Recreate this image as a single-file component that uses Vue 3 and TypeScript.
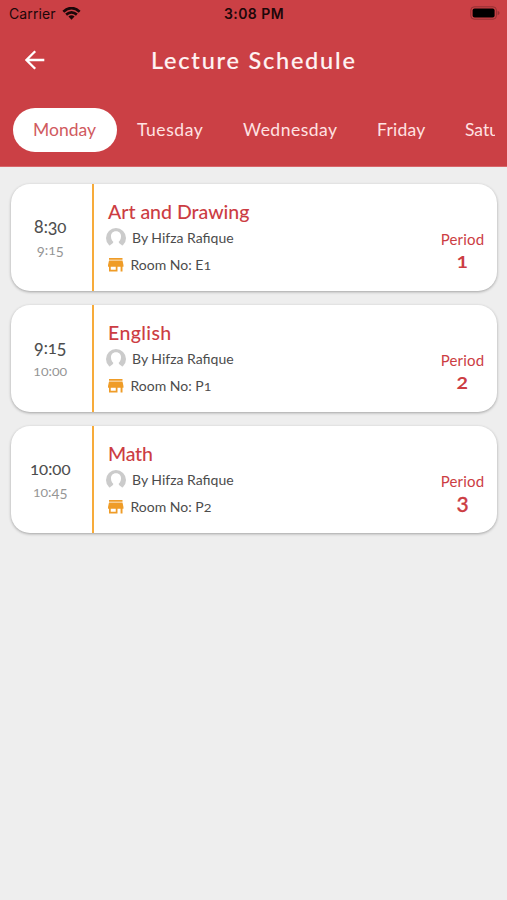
<script setup lang="ts">
interface Lecture {
  subject: string
  start: string
  end: string
  teacher: string
  room: string
  period: string
}

const days: string[] = ['Monday', 'Tuesday', 'Wednesday', 'Friday', 'Saturday']

const lectures: Lecture[] = [
  { subject: 'Art and Drawing', start: '8:30', end: '9:15', teacher: 'Hifza Rafique', room: 'E1', period: '1' },
  { subject: 'English', start: '9:15', end: '10:00', teacher: 'Hifza Rafique', room: 'P1', period: '2' },
  { subject: 'Math', start: '10:00', end: '10:45', teacher: 'Hifza Rafique', room: 'P2', period: '3' },
]

// Old-style figures: 0-2 sit at x-height, 3 4 5 7 9 drop below the baseline.
function figure(ch: string): string {
  if ('012'.includes(ch)) return 'fig-short'
  if ('34579'.includes(ch)) return 'fig-low'
  return 'fig'
}
</script>

<template>
  <main class="screen">
    <header class="header">
      <div class="status">
        <div class="carrier">
          <span>Carrier</span>
          <svg class="wifi" viewBox="0 0 20 14">
            <path d="M1.2 5.1Q10-2.7 18.8 5.1" />
            <path d="M4.2 8.2Q10 3.2 15.8 8.2" />
            <path class="wifi-dot" d="M6.7 10.2Q10 7.5 13.3 10.2L10 13.7Z" />
          </svg>
        </div>
        <span class="clock">3:08 PM</span>
        <svg class="battery" viewBox="0 0 30 14">
          <rect class="battery-shell" x=".8" y=".8" width="25.6" height="12.4" rx="3.4" />
          <rect x="2.6" y="2.6" width="22" height="8.8" rx="2" />
          <path class="battery-cap" d="M27.6 4.8Q29.6 5.5 29.6 7T27.6 9.2Z" />
        </svg>
      </div>
      <div class="titlebar">
        <svg class="back" viewBox="0 0 20 20">
          <path d="M19.3 10H1.4M10.2 1.2L1.4 10L10.2 18.8" />
        </svg>
        <h1>Lecture Schedule</h1>
      </div>
      <nav class="tabs">
        <span v-for="(day, i) in days" :key="day" class="tab" :class="[day.toLowerCase(), { active: i === 0 }]">{{ day }}</span>
      </nav>
    </header>

    <section class="list">
      <article v-for="item in lectures" :key="item.period" class="card">
        <div class="times">
          <div class="start"><span v-for="(c, i) in item.start" :key="i" :class="figure(c)">{{ c }}</span></div>
          <div class="end"><span v-for="(c, i) in item.end" :key="i" :class="figure(c)">{{ c }}</span></div>
        </div>
        <div class="details">
          <h2 :class="item.subject.split(' ')[0].toLowerCase()">{{ item.subject }}</h2>
          <div class="row">
            <svg class="avatar" viewBox="0 0 20 20">
              <circle cx="10" cy="10" r="10" fill="#cbcbcb" />
              <path d="M10 3.2C6.6 3.2 4.8 5.6 5 8.7C5.1 11 6.2 12.8 7.3 13.8C7.3 15.4 6 16 4 17.2L4.6 20H15.4L16 17.2C14 16 12.7 15.4 12.7 13.8C13.8 12.8 14.9 11 15 8.7C15.2 5.6 13.4 3.2 10 3.2Z" fill="#fff" />
            </svg>
            <span class="teacher">By {{ item.teacher }}</span>
          </div>
          <div class="row">
            <svg class="store" viewBox="0 0 16 14">
              <path fill-rule="evenodd" d="M1 0H15V1.8H1ZM1 2.6H15L16 7.2V9H15V14H13V9H9.8V14H1V9H0V7.2ZM2.8 9V12.2H8V9Z" fill="#ef9c27" />
            </svg>
            <span class="room">Room No: {{ item.room[0] }}<span :class="figure(item.room[1])">{{ item.room[1] }}</span></span>
          </div>
        </div>
        <div class="period">
          <span class="period-label">Period</span>
          <span class="period-number" :class="{ tall: item.period === '3' }">{{ item.period }}</span>
        </div>
      </article>
    </section>
  </main>
</template>

<style>
body {
  margin: 0;
  background: #eeeeee;
}
</style>

<style scoped>
.screen {
  width: 507px;
  height: 900px;
  overflow: hidden;
  background: #eeeeee;
  font-family: Lato, "Open Sans", sans-serif;
}
.header {
  box-sizing: border-box;
  height: 167px;
  background: #cb4045;
  border-bottom: 1px solid #d8666a;
}
.status {
  display: grid;
  grid-template-columns: 1fr auto 1fr;
  align-items: center;
  height: 28px;
  padding: 0 7px 0 9px;
  font-family: Inter, sans-serif;
  font-size: 14px;
  line-height: 28px;
  color: #1c0709;
}
.carrier {
  display: flex;
  align-items: center;
  gap: 6px;
  letter-spacing: 0.12px;
}
.wifi {
  width: 19px;
  height: 13px;
  margin-top: -2px;
  fill: none;
  stroke: #1c0709;
  stroke-width: 2.9;
}
.wifi-dot {
  fill: #1c0709;
  stroke: none;
}
.clock {
  margin-right: 1px;
  font-weight: 600;
  letter-spacing: 0.45px;
}
.battery {
  justify-self: end;
  width: 30px;
  height: 14px;
  margin-top: -2px;
  fill: #000;
}
.battery-shell {
  fill: none;
  stroke: #933034;
  stroke-width: 1;
}
.battery-cap {
  fill: #933034;
}
.titlebar {
  display: grid;
  grid-template-columns: 126px 1fr;
  align-items: center;
  height: 64px;
  padding-left: 25px;
}
.back {
  width: 20px;
  height: 20px;
  fill: none;
  stroke: #fff;
  stroke-width: 2.3;
}
h1 {
  margin: 0;
  font-size: 23.5px;
  font-weight: 500;
  line-height: 30px;
  letter-spacing: 1.78px;
  color: #fff3f3;
  -webkit-text-stroke: 0.12px #fff3f3;
  white-space: nowrap;
}
.tabs {
  display: flex;
  height: 44px;
  margin: 16px 12px 0 13px;
  overflow: hidden;
}
.tab {
  flex: none;
  box-sizing: border-box;
  padding-left: 20px;
  border-radius: 22px;
  font-size: 17.5px;
  line-height: 43px;
  color: #ffe2e2;
}
.monday { width: 104px; }
.tuesday { width: 106px; letter-spacing: 0.55px; }
.wednesday { width: 134px; letter-spacing: 0.5px; }
.friday { width: 88px; letter-spacing: 0.25px; }
.active {
  background: #fff;
  color: #d05a60;
}
.list {
  display: flex;
  flex-direction: column;
  gap: 14.5px;
  padding: 17px 10px 0 11px;
}
.card {
  display: flex;
  height: 106.5px;
  overflow: hidden;
  border-radius: 19px;
  background: #fff;
  box-shadow: 0 1px 3px rgba(0, 0, 0, 0.32);
}
.times {
  box-sizing: border-box;
  width: 82.5px;
  padding: 31px 2px 0 0;
  border-right: 2px solid #f7ab3a;
  text-align: center;
}
.start {
  height: 23px;
  font-size: 16.5px;
  line-height: 24px;
  color: #4c4c4c;
  -webkit-text-stroke: 0.1px #4c4c4c;
}
.end {
  height: 22px;
  font-size: 13.8px;
  line-height: 23px;
  color: #959595;
}
.fig-short {
  display: inline-block;
  font-size: 0.95em;
  line-height: 1;
  transform: scaleY(0.85);
  transform-origin: 50% 82%;
}
.fig-low {
  display: inline-block;
  line-height: 1;
  transform: translateY(0.15em);
}
.details {
  flex: 1;
  padding: 14.5px 0 0 14.5px;
}
h2 {
  margin: 0;
  height: 26px;
  font-size: 19.5px;
  font-weight: 500;
  line-height: 26px;
  color: #cc3d43;
  white-space: nowrap;
}
.english {
  letter-spacing: 0.4px;
}
.math {
  letter-spacing: -0.2px;
}
.row {
  display: flex;
  align-items: center;
  height: 27px;
  font-size: 14px;
  line-height: 26px;
  color: #4c4c4c;
  white-space: nowrap;
}
.avatar {
  flex: none;
  width: 20px;
  height: 20px;
  margin-left: -2.5px;
}
.teacher {
  margin-left: 6.5px;
}
.store {
  flex: none;
  width: 15.5px;
  height: 13.5px;
}
.room {
  margin-left: 7px;
}
.period {
  display: flex;
  flex-direction: column;
  align-items: center;
  width: 69px;
  padding-top: 45px;
  color: #cc3d43;
}
.period-label {
  height: 21px;
  font-size: 15px;
  line-height: 21px;
  letter-spacing: 0.2px;
}
.period-number {
  font-size: 18px;
  font-weight: 700;
  line-height: 22px;
  transform: scale(1.1, 0.95);
}
.tall {
  font-size: 21px;
  font-weight: 500;
  line-height: 24px;
  transform: none;
  -webkit-text-stroke: 0.3px #cc3d43;
}
</style>
